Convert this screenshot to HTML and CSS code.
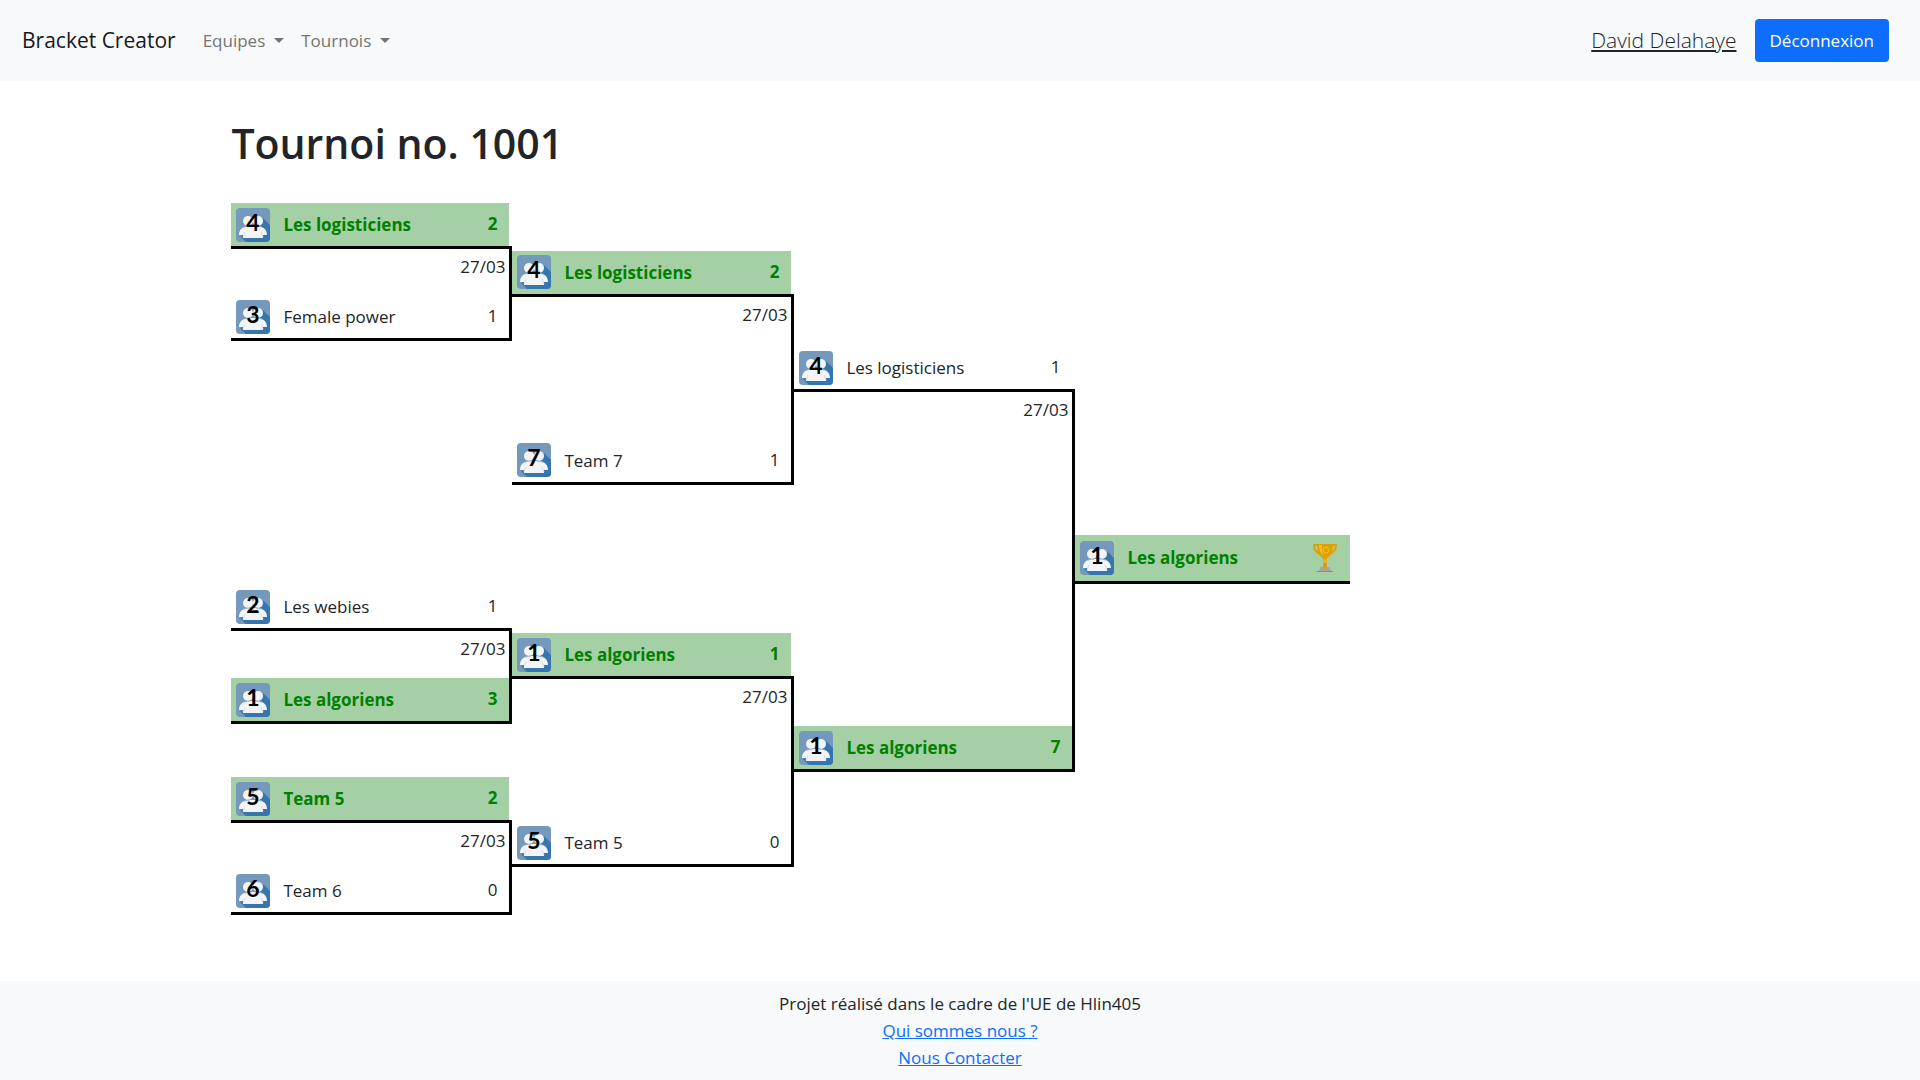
FILE: index.html
```
<!DOCTYPE html>
<html lang="fr">
<head>
<meta charset="utf-8">
<title>Bracket Creator</title>
<link rel="stylesheet" href="styles.css">
</head>
<body>
<svg class="defs" aria-hidden="true">
  <symbol id="group" viewBox="0 0 34 34">
    <rect width="34" height="34" rx="4" fill="#7499bd"/>
    <path d="M27 10l7 7v13a4 4 0 0 1-4 4H10l-6-6 18-6z" fill="#3775ae"/>
    <circle cx="12" cy="13" r="5" fill="#f3f4f5"/>
    <circle cx="22" cy="13" r="5" fill="#f3f4f5"/>
    <path d="M3 27c0-5 3-8 8-9h12c5 1 8 4 8 9h-4v3H7v-3z" fill="#f3f4f5"/>
    <path d="M8 19q4-1 6-1M26 19q-4-1-6-1" fill="none" stroke="#8faccb"/>
    <path d="M7 29l2-5M27 29l-2-5" fill="none" stroke="#d5dce4"/>
  </symbol>
</svg>

<header class="navbar">
  <a class="brand" href="#">Bracket Creator</a>
  <nav class="menu">
    <button class="dropdown" type="button">Equipes</button>
    <button class="dropdown" type="button">Tournois</button>
  </nav>
  <a class="user" href="#">David Delahaye</a>
  <button class="logout" type="button">Déconnexion</button>
</header>

<main class="content">
  <h1>Tournoi no. 1001</h1>

  <div class="bracket">
    <section class="match round-1 slot-1">
      <div class="team won"><svg class="seed"><use href="#group"/><text x="17" y="23">4</text></svg><span class="name">Les logisticiens</span><span class="score">2</span></div>
      <div class="link"><time>27/03</time>
        <div class="team"><svg class="seed"><use href="#group"/><text x="17" y="23">3</text></svg><span class="name">Female power</span><span class="score">1</span></div>
      </div>
    </section>
    <section class="match round-1 slot-3">
      <div class="team"><svg class="seed"><use href="#group"/><text x="17" y="23">2</text></svg><span class="name">Les webies</span><span class="score">1</span></div>
      <div class="link"><time>27/03</time>
        <div class="team won"><svg class="seed"><use href="#group"/><text x="17" y="23">1</text></svg><span class="name">Les algoriens</span><span class="score">3</span></div>
      </div>
    </section>
    <section class="match round-1 slot-4">
      <div class="team won"><svg class="seed"><use href="#group"/><text x="17" y="23">5</text></svg><span class="name">Team 5</span><span class="score">2</span></div>
      <div class="link"><time>27/03</time>
        <div class="team"><svg class="seed"><use href="#group"/><text x="17" y="23">6</text></svg><span class="name">Team 6</span><span class="score">0</span></div>
      </div>
    </section>

    <section class="match round-2 top-half">
      <div class="team won"><svg class="seed"><use href="#group"/><text x="17" y="23">4</text></svg><span class="name">Les logisticiens</span><span class="score">2</span></div>
      <div class="link"><time>27/03</time>
        <div class="team"><svg class="seed"><use href="#group"/><text x="17" y="23">7</text></svg><span class="name">Team 7</span><span class="score">1</span></div>
      </div>
    </section>
    <section class="match round-2 bottom-half">
      <div class="team won"><svg class="seed"><use href="#group"/><text x="17" y="23">1</text></svg><span class="name">Les algoriens</span><span class="score">1</span></div>
      <div class="link"><time>27/03</time>
        <div class="team"><svg class="seed"><use href="#group"/><text x="17" y="23">5</text></svg><span class="name">Team 5</span><span class="score">0</span></div>
      </div>
    </section>

    <section class="match round-3">
      <div class="team"><svg class="seed"><use href="#group"/><text x="17" y="23">4</text></svg><span class="name">Les logisticiens</span><span class="score">1</span></div>
      <div class="link"><time>27/03</time>
        <div class="team won"><svg class="seed"><use href="#group"/><text x="17" y="23">1</text></svg><span class="name">Les algoriens</span><span class="score">7</span></div>
      </div>
    </section>

    <div class="team won champion">
      <svg class="seed"><use href="#group"/><text x="17" y="23">1</text></svg><span class="name">Les algoriens</span>
      <svg class="cup" viewBox="0 0 26 30" role="img" aria-label="Vainqueur">
        <path d="M6 2H2q0 7 7 9M20 2h4q0 7-7 9" fill="none" stroke="#e0a008" stroke-width="2"/>
        <path d="M5 1h16q0 12-6 14v3h-4v-3Q5 13 5 1z" fill="#e0a000"/>
        <path d="M7 2h3q-1 7 2 11Q7 10 7 2z" fill="#f5bd28"/>
        <circle cx="14" cy="7" r="3" fill="none" stroke="#f5bd28"/>
        <path d="M12 17h2l1 7h-4z" fill="#d9970a"/>
        <circle cx="13" cy="18" r="2" fill="#f0b51c"/>
        <path d="M8 24h10l1 4H7z" fill="#a3a6aa"/>
        <path d="M11 24h4l1 3h-6z" fill="#c9a24a"/>
        <path d="M5 28h16v1H5z" fill="#858b94"/>
      </svg>
    </div>
  </div>
</main>

<footer class="footer">
  <p>Projet réalisé dans le cadre de l'UE de Hlin405</p>
  <p><a href="#">Qui sommes nous ?</a></p>
  <p><a href="#">Nous Contacter</a></p>
</footer>
</body>
</html>
```
FILE: styles.css
```
* { box-sizing: border-box; }

body {
  margin: 0;
  min-height: 100vh;
  display: flex;
  flex-direction: column;
  background: #fff;
  color: #212529;
  font-family: "Segoe UI", "Open Sans", "Noto Sans", sans-serif;
  font-size: 17px;
  line-height: 27px;
}

button { font: inherit; border: 0; cursor: pointer; }

.defs { display: none; }

/* Navigation */
.navbar {
  display: flex;
  align-items: center;
  padding: 19px 31px 19px 22px;
  background: #f8f9fa;
}

.brand {
  color: #16181b;
  font-size: 21px;
  text-decoration: none;
}

.menu {
  display: flex;
  gap: 17px;
  margin-left: 27px;
  margin-right: auto;
}

.dropdown {
  display: flex;
  align-items: center;
  gap: 9px;
  padding: 0;
  background: none;
  color: #737475;
}

.dropdown::after {
  content: "";
  border: 5px solid transparent;
  border-top-color: currentColor;
  border-bottom: 0;
}

.user {
  margin-right: 18px;
  color: #212529;
  font-size: 21px;
  font-weight: 300;
}

.logout {
  padding: 8px 15px;
  border-radius: 4px;
  background: #0d6efd;
  color: #fff;
}

/* Page */
.content {
  flex: 1;
  padding: 35px calc(12% + 1px) 66px;
}

h1 {
  margin: 0 0 33px;
  font-size: 41px;
  font-weight: 600;
  line-height: 54px;
}

/* Bracket */
.bracket {
  display: grid;
  grid-template-columns: 281px 282px 281px 275px;
  grid-template-rows: 138px 138px 139px 138px;
  row-gap: 53px;
  align-items: center;
}

.match { display: flex; flex-direction: column; }

.round-1 { grid-column: 1; height: 100%; }
.round-2 { grid-column: 2; height: 234px; }
.round-3 { grid-column: 3; grid-row: 1 / span 4; height: 426px; }
.slot-1 { grid-row: 1; }
.slot-3 { grid-row: 3; }
.slot-4 { grid-row: 4; }
.top-half { grid-row: 1 / span 2; }
.bottom-half { grid-row: 3 / span 2; }

.link {
  flex: 1;
  display: flex;
  flex-direction: column;
  justify-content: space-between;
  border: 3px solid #000;
  border-left: 0;
}

.link time {
  padding: 4px 4px 0 0;
  text-align: right;
}

.team {
  display: flex;
  align-items: center;
  height: 43px;
  margin-right: 3px;
  padding: 0 12px 0 5px;
}

.link .team { margin-right: 0; }

.name { flex: 1; margin-left: 13px; }

.score { padding-bottom: 2px; }

.won {
  background: #a5d0a5;
  color: #008000;
  font-weight: 700;
}

.champion {
  grid-column: 4;
  grid-row: 1 / span 4;
  height: 49px;
  margin: 0 0 0 -3px;
  border-left: 3px solid #000;
  border-bottom: 3px solid #000;
}

.seed { width: 34px; height: 34px; }

.seed text {
  fill: #000;
  font: 700 23px Lato, "Liberation Sans", sans-serif;
  text-anchor: middle;
}

.cup { width: 26px; height: 30px; }

/* Footer */
.footer {
  padding: 9px 0;
  background: #f8f9fa;
  text-align: center;
}

.footer p { margin: 0; }
.footer a { color: #0d6efd; }
```
